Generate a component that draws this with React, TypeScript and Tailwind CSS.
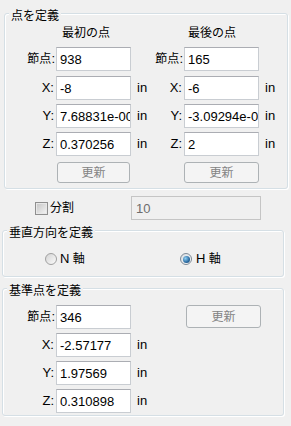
import React from "react";

function Field({ value, className = "" }: { value: string; className?: string }) {
  return (
    <input
      readOnly
      value={value}
      className={`h-[24px] w-[75px] shrink-0 border border-[#c9cdd2] border-t-[#abadb3] bg-white pl-[3px] pr-0 text-[13px] leading-[22px] text-black outline-none ${className}`}
    />
  );
}

function Row({
  label,
  value,
  labelW,
  className = "",
  jp = false,
}: {
  label: string;
  value: string;
  labelW: string;
  className?: string;
  jp?: boolean;
}) {
  return (
    <div className={`flex h-[24px] items-center ${className}`}>
      <div className={`${labelW} shrink-0 pr-[2px] text-right ${jp ? "text-[12px]" : "text-[13px]"}`}>{label}</div>
      <Field value={value} />
      <div className="ml-[6px] text-[13px]">in</div>
    </div>
  );
}

function NodeRow({ value, labelW, className = "" }: { value: string; labelW: string; className?: string }) {
  return (
    <div className={`flex h-[24px] items-center ${className}`}>
      <div className={`${labelW} shrink-0 pr-[1px] text-right text-[12px]`}>
        節点<span className="text-[13px]">:</span>
      </div>
      <Field value={value} />
    </div>
  );
}

function Btn({ className = "" }: { className?: string }) {
  return (
    <button
      disabled
      className={`flex items-center justify-center rounded-[3px] border border-[#adb2b5] bg-[#f4f4f4] text-[12px] text-[#838383] ${className}`}
    >
      更新
    </button>
  );
}

function Group({ title, className, children }: { title: string; className: string; children: React.ReactNode }) {
  return (
    <div
      className={`relative rounded-[3px] border border-[#d5dfe5] shadow-[inset_1px_1px_0_#ffffff,1px_1px_0_#ffffff] ${className}`}
    >
      <span className="absolute -top-[5px] left-[4px] bg-[#f0f0f0] px-[2px] text-[12px] leading-[14px] text-black">
        {title}
      </span>
      {children}
    </div>
  );
}

export default function App() {
  return (
    <div className="flex h-[426px] w-[291px] flex-col overflow-hidden bg-[#f0f0f0] font-['Liberation_Sans','Noto_Sans_CJK_JP',sans-serif] text-black">
      {/* 点を定義 */}
      <Group title="点を定義" className="ml-[4px] mt-[13px] w-[284px] pb-[5px] pt-[12px]">
        <div className="flex">
          <div className="flex w-[145px] flex-col">
            <div className="h-[14px] pl-[57px] text-[12px] leading-[14px]">最初の点</div>
            <NodeRow value="938" labelW="w-[51px]" className="mt-[7px]" />
            <Row label="X:" value="-8" labelW="w-[51px]" className="mt-[5px]" />
            <Row label="Y:" value="7.68831e-006" labelW="w-[51px]" className="mt-[4px]" />
            <Row label="Z:" value="0.370256" labelW="w-[51px]" className="mt-[4px]" />
            <Btn className="ml-[52px] mt-[6px] h-[21px] w-[73px]" />
          </div>
          <div className="flex w-[130px] flex-col">
            <div className="h-[14px] pl-[38px] text-[12px] leading-[14px]">最後の点</div>
            <NodeRow value="165" labelW="w-[34px]" className="mt-[7px]" />
            <Row label="X:" value="-6" labelW="w-[34px]" className="mt-[5px]" />
            <Row label="Y:" value="-3.09294e-006" labelW="w-[34px]" className="mt-[4px]" />
            <Row label="Z:" value="2" labelW="w-[34px]" className="mt-[4px]" />
            <Btn className="ml-[34px] mt-[6px] h-[21px] w-[75px]" />
          </div>
        </div>
      </Group>

      {/* 分割 */}
      <div className="mt-[7px] flex h-[24px] items-center">
        <div className="flex w-[131px] items-center pl-[35px]">
          <div className="h-[13px] w-[13px] border border-[#8f8f8f] bg-linear-to-br from-[#c4c4c4] to-[#f6f6f6] shadow-[inset_0_0_0_1px_#e8e8e8]" />
          <span className="ml-[2px] text-[12px] leading-[14px]">分割</span>
        </div>
        <input
          readOnly
          disabled
          value="10"
          className="h-[24px] w-[130px] border border-[#c5c5c5] bg-[#f0f0f0] pl-[4px] text-[13px] text-[#6d6d6d] outline-none"
        />
      </div>

      {/* 垂直方向を定義 */}
      <Group title="垂直方向を定義" className="ml-[2px] mt-[10px] w-[282px] pb-[10px] pt-[21px]">
        <div className="flex h-[14px] items-center">
          <div className="flex w-[177px] items-center pl-[42px]">
            <div className="h-[12px] w-[12px] rounded-full border border-[#a0a0a0] bg-linear-to-br from-[#d4d4d4] to-[#fbfbfb]" />
            <span className="ml-[3px] text-[12px] leading-[14px]">
              <span className="text-[13px]">N</span> 軸
            </span>
          </div>
          <div className="flex items-center">
            <div className="flex h-[12px] w-[12px] items-center justify-center rounded-full border border-[#7e8a96] bg-linear-to-br from-[#d8dde2] to-[#fbfbfb]">
              <div className="h-[7px] w-[7px] rounded-full bg-[radial-gradient(circle_at_35%_35%,#8fd0f5,#2a6aa0_60%,#16446e)]" />
            </div>
            <span className="ml-[4px] text-[12px] leading-[14px]">
              <span className="text-[13px]">H</span> 軸
            </span>
          </div>
        </div>
      </Group>

      {/* 基準点を定義 */}
      <Group title="基準点を定義" className="ml-[2px] mt-[11px] w-[282px] pb-[2px] pt-[16px]">
        <div className="flex">
          <div className="flex w-[147px] flex-col">
            <NodeRow value="346" labelW="w-[53px]" />
            <Row label="X:" value="-2.57177" labelW="w-[53px]" className="mt-[4px]" />
            <Row label="Y:" value="1.97569" labelW="w-[53px]" className="mt-[4px]" />
            <Row label="Z:" value="0.310898" labelW="w-[53px]" className="mt-[4px]" />
          </div>
          <div className="flex flex-col">
            <Btn className="ml-[36px] h-[23px] w-[75px]" />
          </div>
        </div>
      </Group>
    </div>
  );
}
